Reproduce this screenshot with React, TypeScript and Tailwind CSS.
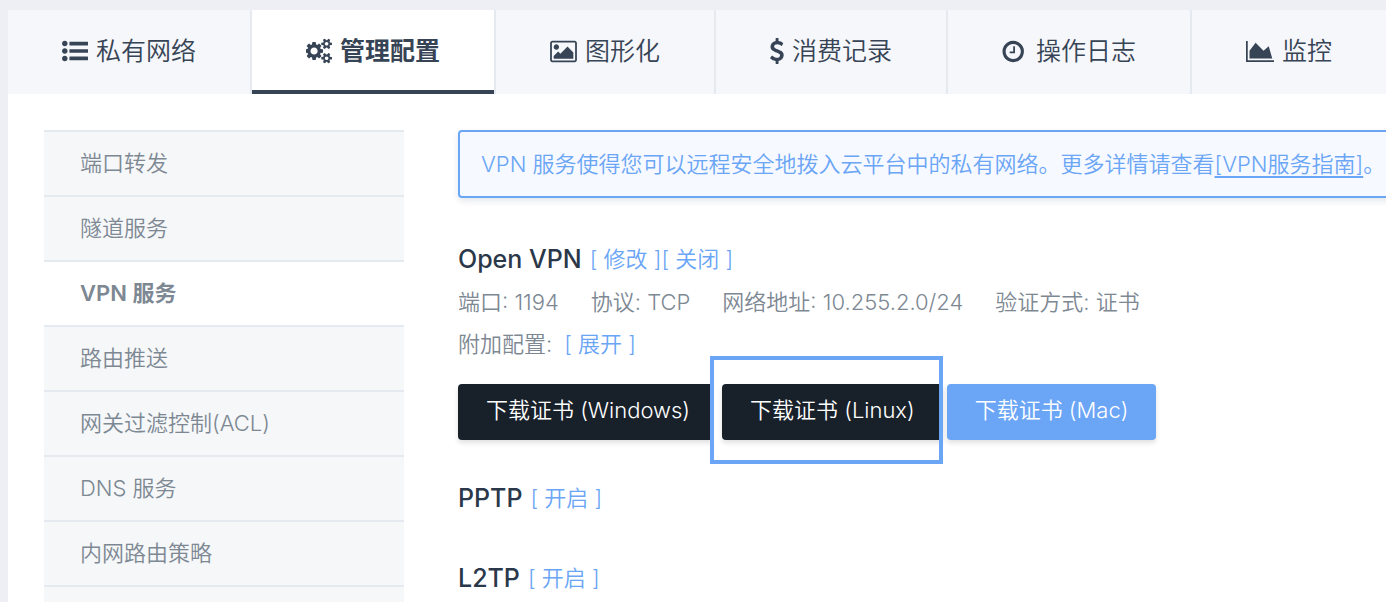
import type { ReactNode } from "react";

type IconProps = { d: string; viewBox: string; className: string };

function Icon({ d, viewBox, className }: IconProps) {
  return (
    <svg viewBox={viewBox} className={`shrink-0 fill-current ${className}`} aria-hidden="true">
      <path d={d} />
    </svg>
  );
}

const tabs = [
  {
    label: "私有网络",
    viewBox: "0 0 1792 1792",
    size: "h-[26px] w-[26px]",
    d: "M384 1408q0 80-56 136t-136 56-136-56-56-136 56-136 136-56 136 56 56 136zm0-512q0 80-56 136t-136 56-136-56-56-136 56-136 136-56 136 56 56 136zm1408 416v192q0 13-9.5 22.5t-22.5 9.5h-1216q-13 0-22.5-9.5t-9.5-22.5v-192q0-13 9.5-22.5t22.5-9.5h1216q13 0 22.5 9.5t9.5 22.5zm-1408-928q0 80-56 136t-136 56-136-56-56-136 56-136 136-56 136 56 56 136zm1408 416v192q0 13-9.5 22.5t-22.5 9.5h-1216q-13 0-22.5-9.5t-9.5-22.5v-192q0-13 9.5-22.5t22.5-9.5h1216q13 0 22.5 9.5t9.5 22.5zm0-512v192q0 13-9.5 22.5t-22.5 9.5h-1216q-13 0-22.5-9.5t-9.5-22.5v-192q0-13 9.5-22.5t22.5-9.5h1216q13 0 22.5 9.5t9.5 22.5z",
  },
  {
    label: "管理配置",
    active: true,
    viewBox: "0 0 1856 1792",
    size: "h-[26px] w-[26px]",
    d: "M832 896q0-106-75-181t-181-75-181 75-75 181 75 181 181 75 181-75 75-181zm768 512q0-52-38-90t-90-38-90 38-38 90q0 53 37.5 90.5t90.5 37.5 90.5-37.5 37.5-90.5zm0-1024q0-52-38-90t-90-38-90 38-38 90q0 53 37.5 90.5t90.5 37.5 90.5-37.5 37.5-90.5zm-384 421v185q0 10-7 19.5t-16 10.5l-155 24q-11 35-32 76 34 48 90 115 7 11 7 20 0 12-7 19-23 30-82.5 89.5t-78.5 59.5q-11 0-21-7l-115-90q-37 19-77 31-11 108-23 155-7 24-30 24h-186q-11 0-20-7.5t-10-17.5l-23-153q-34-10-75-31l-118 89q-7 7-20 7-11 0-21-8-144-133-144-160 0-9 7-19 10-14 41-53t47-61q-23-44-35-82l-152-24q-10-1-17-9.5t-7-19.5v-185q0-10 7-19.5t16-10.5l155-24q11-35 32-76-34-48-90-115-7-11-7-20 0-12 7-20 22-30 82-89t79-59q11 0 21 7l115 90q34-18 77-32 11-108 23-154 7-24 30-24h186q11 0 20 7.5t10 17.5l23 153q34 10 75 31l118-89q8-7 20-7 11 0 21 8 144 133 144 160 0 8-7 19-12 16-42 54t-45 60q23 48 34 82l152 23q10 2 17 10.5t7 19.5zm640 533v140q0 16-149 31-12 27-30 52 51 113 51 138 0 4-4 7-122 71-124 71-8 0-46-47t-52-68q-20 2-30 2t-30-2q-14 21-52 68t-46 47q-2 0-124-71-4-3-4-7 0-25 51-138-18-25-30-52-149-15-149-31v-140q0-16 149-31 13-29 30-52-51-113-51-138 0-4 4-7 4-2 35-20t59-34 30-16q8 0 46 46.5t52 67.5q20-2 30-2t30 2q51-71 92-112l6-2q4 0 124 70 4 3 4 7 0 25-51 138 17 23 30 52 149 15 149 31zm0-1024v140q0 16-149 31-12 27-30 52 51 113 51 138 0 4-4 7-122 71-124 71-8 0-46-47t-52-68q-20 2-30 2t-30-2q-14 21-52 68t-46 47q-2 0-124-71-4-3-4-7 0-25 51-138-18-25-30-52-149-15-149-31v-140q0-16 149-31 13-29 30-52-51-113-51-138 0-4 4-7 4-2 35-20t59-34 30-16q8 0 46 46.5t52 67.5q20-2 30-2t30 2q51-71 92-112l6-2q4 0 124 70 4 3 4 7 0 25-51 138 17 23 30 52 149 15 149 31z",
  },
  {
    label: "图形化",
    viewBox: "0 0 1920 1792",
    size: "h-[25px] w-[27px]",
    d: "M640 576q0 80-56 136t-136 56-136-56-56-136 56-136 136-56 136 56 56 136zm1024 384v448h-1408v-192l320-320 160 160 512-512zm96-704h-1600q-13 0-22.5 9.5t-9.5 22.5v1216q0 13 9.5 22.5t22.5 9.5h1600q13 0 22.5-9.5t9.5-22.5v-1216q0-13-9.5-22.5t-22.5-9.5zm160 32v1216q0 66-47 113t-113 47h-1600q-66 0-113-47t-47-113v-1216q0-66 47-113t113-47h1600q66 0 113 47t47 113z",
  },
  {
    label: "消费记录",
    viewBox: "420 0 960 1792",
    size: "h-[26px] w-[14px]",
    d: "M1362 1185q0 153-99.5 263.5t-258.5 136.5v175q0 14-9 23t-23 9h-135q-13 0-22.5-9.5t-9.5-22.5v-175q-66-9-127.5-31t-101.5-44.5-74-48-46.5-37.5-17.5-18q-17-21-2-41l103-135q7-10 23-12 15-2 24 9l2 2q113 99 243 125 37 8 74 8 81 0 142.5-43t61.5-122q0-28-15-53t-33.5-42-58.5-37.5-66-32-80-32.5q-39-16-61.5-25t-61.5-26.5-62.5-31-56.5-35.5-53.5-42.5-43.5-49-35.5-58-21-66.5-8.5-78q0-138 98-242t255-134v-180q0-13 9.5-22.5t22.5-9.5h135q14 0 23 9t9 23v176q57 6 110.5 23t87 33.5 63.5 37.5 39 29 15 14q17 18 5 38l-81 146q-8 15-23 16-14 3-27-7-3-3-14.5-12t-39-26.5-58.5-32-74.5-26-85.5-11.5q-95 0-155 43t-60 111q0 26 8.5 48t29.5 41.5 39.5 33 56 31 60.5 27 70 27.5q53 20 81 31.5t76 35 75.5 42.5 62 50 53 63.5 31.5 76.5 13 94z",
  },
  {
    label: "操作日志",
    viewBox: "128 0 1792 1792",
    size: "h-[25px] w-[26px]",
    d: "M1024 544v448q0 14-9 23t-23 9h-320q-14 0-23-9t-9-23v-64q0-14 9-23t23-9h224v-352q0-14 9-23t23-9h64q14 0 23 9t9 23zm416 352q0-148-73-273t-198-198-273-73-273 73-198 198-73 273 73 273 198 198 273 73 273-73 198-198 73-273zm224 0q0 209-103 385.5t-279.5 279.5-385.5 103-385.5-103-279.5-279.5-103-385.5 103-385.5 279.5-279.5 385.5-103 385.5 103 279.5 279.5 103 385.5z",
  },
  {
    label: "监控",
    viewBox: "0 0 2048 1792",
    size: "h-[25px] w-[28px]",
    d: "M2048 1536v128h-2048v-1536h128v1408h1920zm-384-1024l256 896h-1664v-576l448-576 576 576z",
  },
];

const menu = ["端口转发", "隧道服务", "VPN 服务", "路由推送", "网关过滤控制(ACL)", "DNS 服务", "内网路由策略"];

function Action({ children }: { children: ReactNode }) {
  return (
    <button type="button" className="text-[#6aa5f6]">
      [ {children} ]
    </button>
  );
}

function Title({ name, children }: { name: string; children: ReactNode }) {
  return (
    <div className="flex h-11 items-center gap-2">
      <h2 className="text-[25px] font-medium text-[#2b3849]">{name}</h2>
      <div className="flex">{children}</div>
    </div>
  );
}

export default function App() {
  return (
    <div className="flex h-screen flex-col overflow-hidden bg-[#eeeff5] pt-2.5 pl-2 font-['Inter','Noto_Sans_CJK_SC',sans-serif] text-[22px] leading-8 font-[350] whitespace-nowrap text-[#7d8893]">
      <nav className="flex shrink-0 bg-[#f5f7fb]">
        {tabs.map((t) => (
          <a
            key={t.label}
            href="#"
            className={`flex h-[84px] shrink-0 items-center gap-2 border-b-4 px-[54px] pt-0.5 text-[25px] text-[#374455] ${
              t.active ? "border-b-[#374455] bg-white font-bold" : "border-b-[#f5f7fb]"
            } shadow-[2px_0_0_#e5eaf1] not-last:mr-0.5`}
          >
            <Icon d={t.d} viewBox={t.viewBox} className={t.size} />
            <span>{t.label}</span>
          </a>
        ))}
      </nav>

      <div className="flex min-h-0 flex-1 gap-[54px] bg-white pt-9 pl-9">
        <aside className="flex w-[360px] shrink-0 flex-col">
          <ul>
            {menu.map((m) => (
              <li key={m} className="border-t-2 border-[#e5eaf0]">
                <a
                  href="#"
                  className={`flex h-[63px] items-center px-9 pb-0.5 ${
                    m === "VPN 服务" ? "bg-white font-semibold" : "bg-[#f5f7f9]"
                  }`}
                >
                  {m}
                </a>
              </li>
            ))}
          </ul>
          <div className="flex-1 border-t-2 border-[#e5eaf0] bg-[#f5f7f9]" />
        </aside>

        <main className="-mr-2 min-w-0 flex-1">
          <p className="rounded border-2 border-[#6aa5f6] bg-[#f6f9ff] px-[21px] py-4 text-[#6aa5f6] shadow-[0_3px_6px_rgba(40,60,90,0.12)]">
            VPN 服务使得您可以远程安全地拨入云平台中的私有网络。更多详情请查看
            <a href="#" className="underline decoration-2 underline-offset-4">
              [VPN服务指南]
            </a>
            。
          </p>

          <section className="pt-[39px]">
            <Title name="Open VPN">
              <Action>修改</Action>
              <Action>关闭</Action>
            </Title>
            <div className="flex h-[42px] items-center gap-8">
              <span>端口: 1194</span>
              <span>协议: TCP</span>
              <span>网络地址: 10.255.2.0/24</span>
              <span>验证方式: 证书</span>
            </div>
            <div className="flex h-[42px] items-center gap-3">
              <span>附加配置:</span>
              <Action>展开</Action>
            </div>
            <div className="flex gap-1 pt-[19px]">
              <button type="button" className="h-14 rounded bg-[#18202a] px-7 pb-1 text-white shadow-[0_3px_5px_rgba(0,0,0,0.12)]">
                下载证书 (Windows)
              </button>
              <div className="relative isolate before:absolute before:-top-7 before:right-0 before:-bottom-6 before:-left-3 before:-z-10 before:bg-white">
                <button type="button" className="h-14 rounded bg-[#18202a] px-7 pb-1 text-white shadow-[0_3px_5px_rgba(0,0,0,0.12)]">
                  下载证书 (Linux)
                </button>
                <div className="pointer-events-none absolute -top-7 right-0 -bottom-6 -left-3 border-4 border-[#6aa5f6]" />
              </div>
              <button type="button" className="h-14 rounded bg-[#6aa5f6] px-7 pb-1 text-white shadow-[0_3px_5px_rgba(0,0,0,0.12)]">
                下载证书 (Mac)
              </button>
            </div>
          </section>

          <section className="pt-9">
            <Title name="PPTP">
              <Action>开启</Action>
            </Title>
          </section>
          <section className="pt-9">
            <Title name="L2TP">
              <Action>开启</Action>
            </Title>
          </section>
        </main>
      </div>
    </div>
  );
}
